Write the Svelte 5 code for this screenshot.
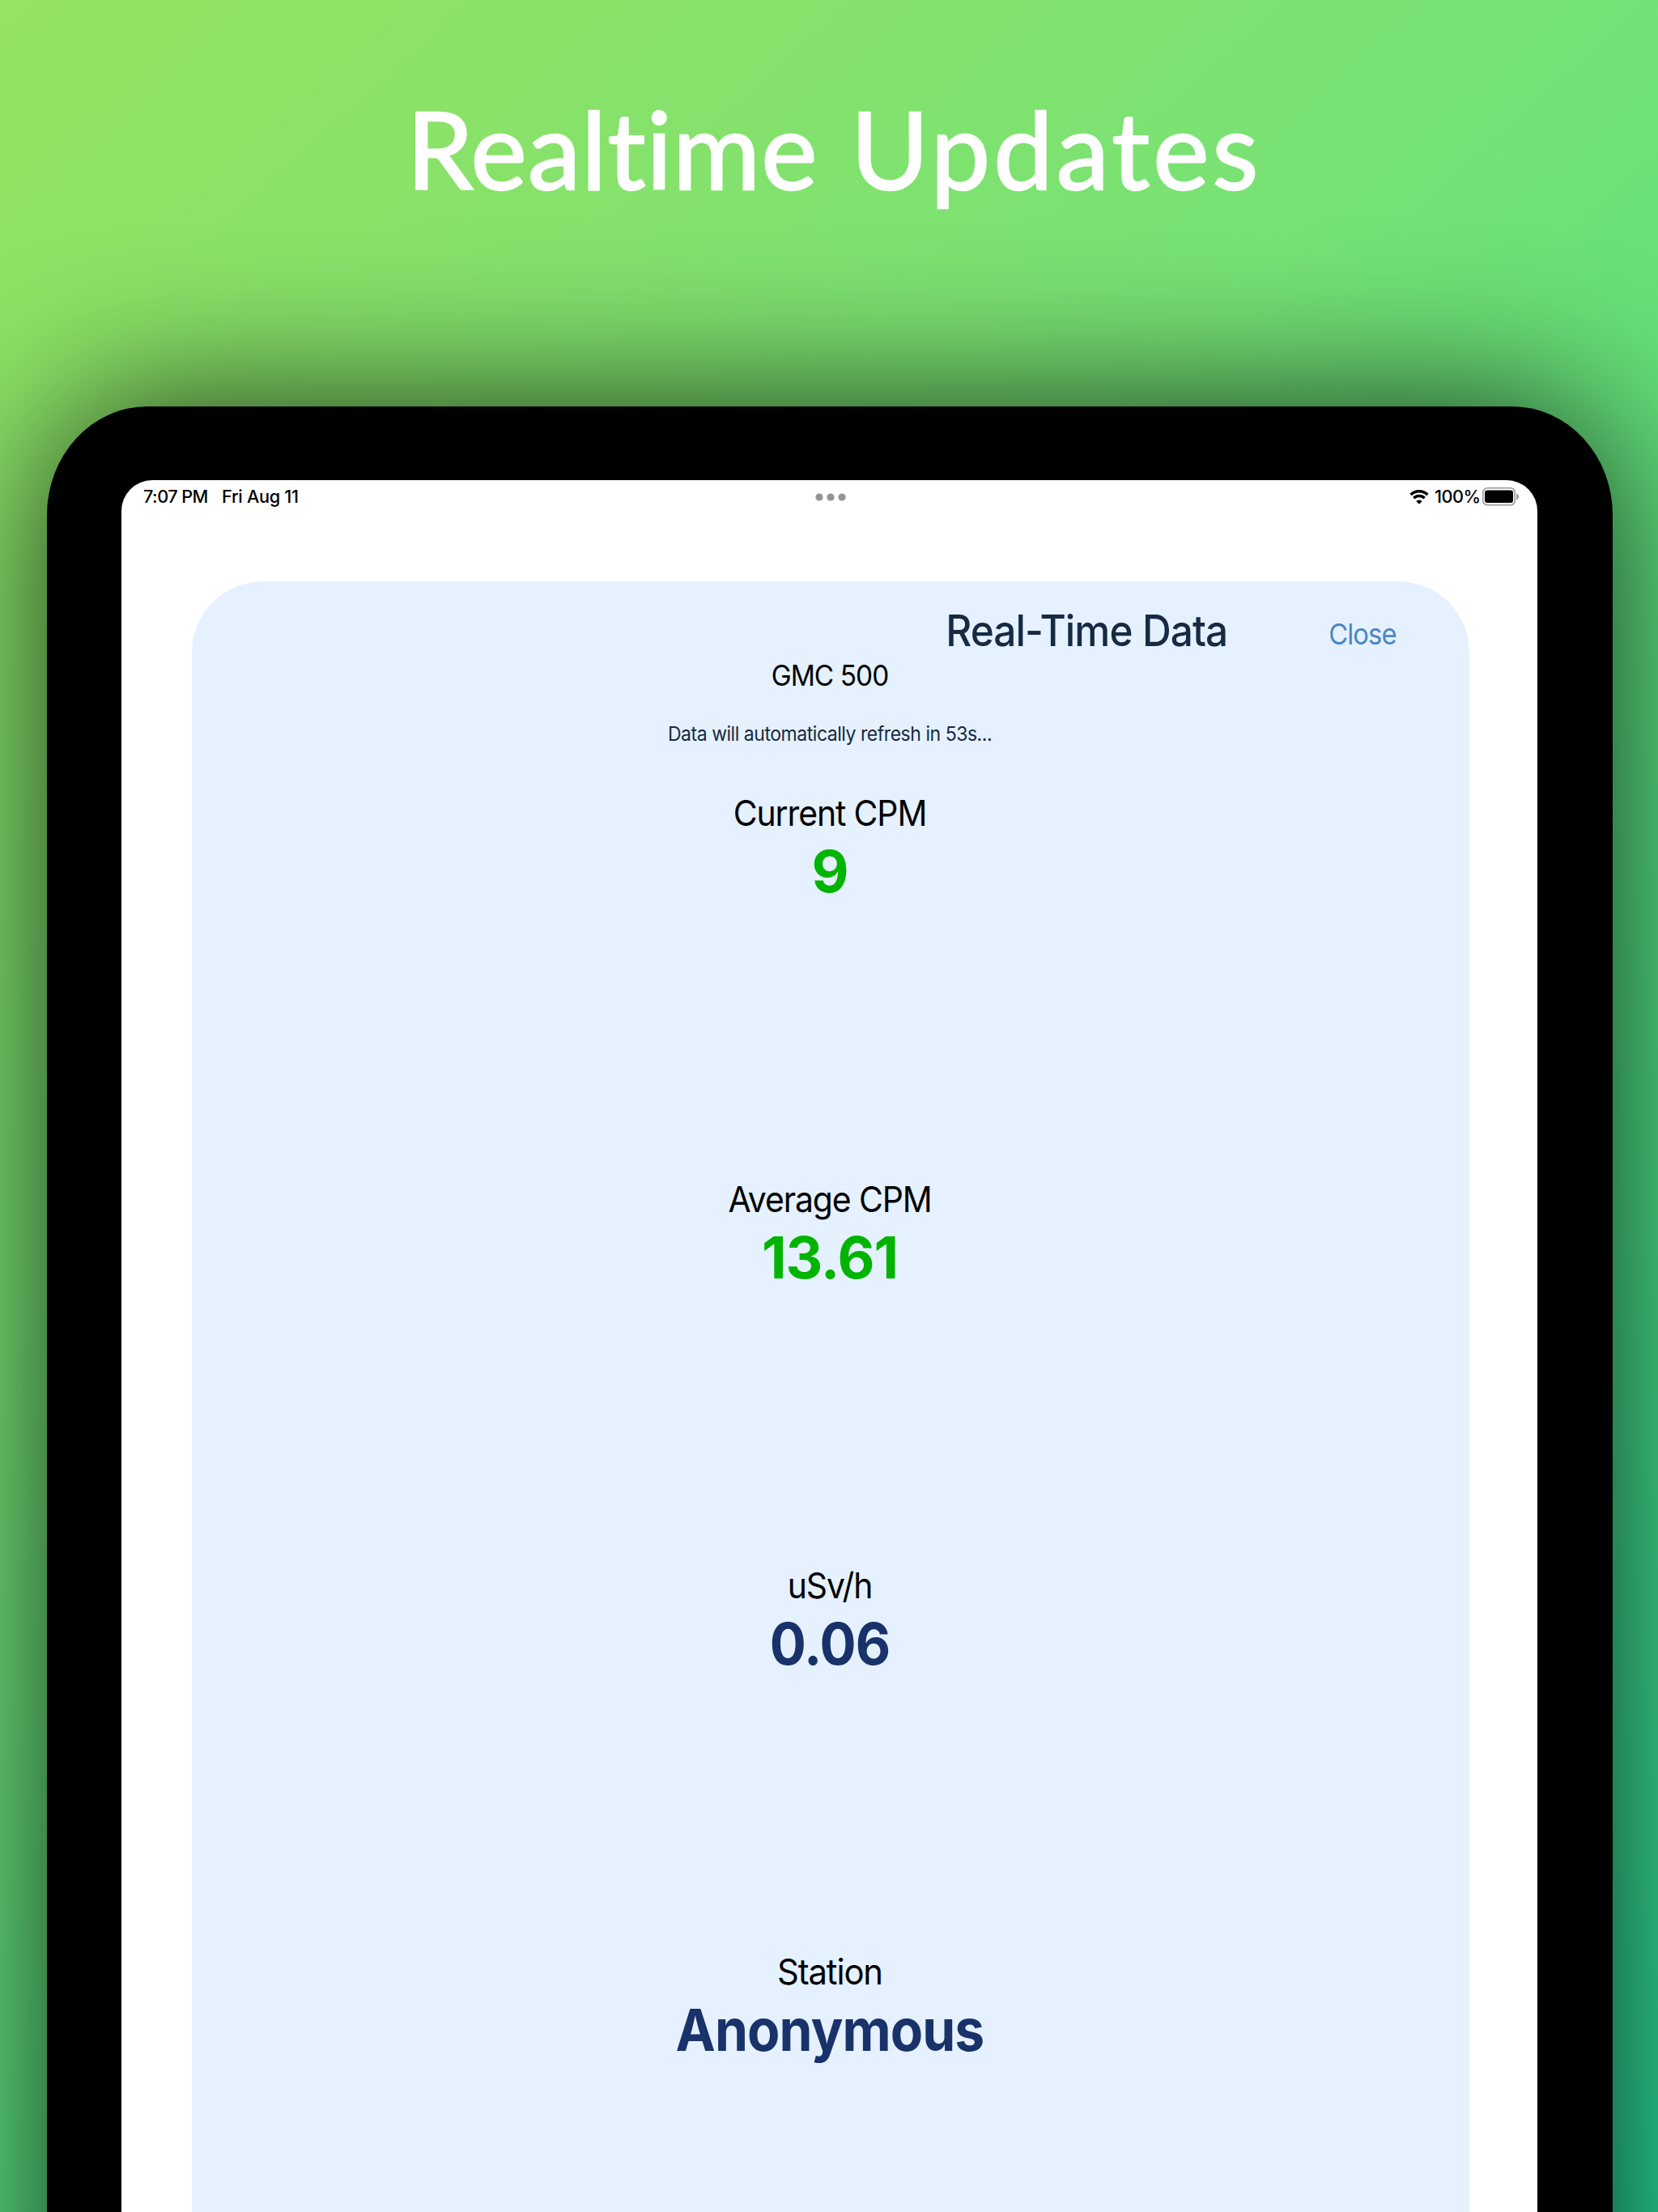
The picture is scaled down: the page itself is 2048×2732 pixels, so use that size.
<script>
  const readings = [
    { label: 'Current CPM', value: '9', kind: 'current' },
    { label: 'Average CPM', value: '13.61', kind: 'average' },
    { label: 'uSv/h', value: '0.06', kind: 'dose' },
    { label: 'Station', value: 'Anonymous', kind: 'station' }
  ];
</script>

<main class="poster">
  <h1><span class="first">Realtime</span> <span class="second">Updates</span></h1>
  <section class="device">
    <div class="screen">
      <div class="status">
        <span class="time">7:07 PM</span>
        <span class="date">Fri Aug 11</span>
        <svg class="dots" viewBox="0 0 38 10"><circle cx="5" cy="5" r="4.6" /><circle cx="19" cy="5" r="4.6" /><circle cx="33" cy="5" r="4.6" /></svg>
        <svg class="wifi" viewBox="0 0 24 19">
          <path d="M1.6 7a14.8 14.8 0 0 1 20.8 0" /><path d="M5.4 11.2a9.4 9.4 0 0 1 13.2 0" />
          <path class="tip" d="M12 18.8 8.2 15a5.4 5.4 0 0 1 7.6 0Z" />
        </svg>
        <span class="percent">100%</span>
        <svg class="battery" viewBox="0 0 46 23">
          <rect class="shell" x="0.8" y="0.8" width="39.4" height="21" rx="5.5" />
          <rect x="3" y="3.6" width="35" height="15.4" rx="3" />
          <path class="nub" d="M42 7.6q3 1.2 3 3.9t-3 3.9Z" />
        </svg>
      </div>
      <article class="card">
        <header><h2>Real-Time Data</h2><a class="close">Close</a></header>
        <p class="device-name">GMC 500</p>
        <p class="refresh">Data will automatically refresh in 53s...</p>
        <div class="readings">
          {#each readings as r}
            <section class="reading {r.kind}">
              <div class="label">{r.label}</div>
              <div class="value">{r.value}</div>
            </section>
          {/each}
        </div>
      </article>
    </div>
  </section>
</main>

<style>
  .poster {
    width: 2048px; height: 2732px; overflow: hidden; box-sizing: border-box;
    padding-left: 58px;
    background: linear-gradient(138deg, #96e261 0%, #76e275 38%, #5cdd7d 57%, #28d394 100%);
    font-family: Inter, "Liberation Sans", sans-serif;
  }
  h1, h2, p { margin: 0; font-weight: 400; }
  h1 {
    height: 502px; box-sizing: border-box; padding-top: 104px; padding-right: 45px;
    text-align: center; color: #fff; font: 400 131px/160px Lato, sans-serif;
    -webkit-text-stroke: 2.4px #fff;
  }
  .first { letter-spacing: 1.2px; margin-right: 7px; }
  .second { letter-spacing: 4.2px; }
  .device {
    width: 1934px; height: 2700px; box-sizing: border-box; padding: 91px 93px 0 92px;
    background: #000; border-radius: 124px 124px 0 0 / 134px 134px 0 0;
    box-shadow: 0 0 190px rgba(0, 0, 0, 0.77);
  }
  .screen {
    height: 2600px; background: #fff; border-radius: 38px 38px 0 0;
    display: flex; flex-direction: column;
  }
  .status {
    height: 125px; box-sizing: border-box; padding: 5px 22px 0 27px;
    display: flex; align-items: flex-start;
    font-size: 21.7px; line-height: 30px; font-weight: 500; color: #000; white-space: nowrap;
  }
  .time { width: 97px; letter-spacing: -0.55px; }
  .date { width: 500px; letter-spacing: -0.3px; }
  .dots { width: 38px; height: 10px; margin: 11px 0 0 233px; fill: #949494; }
  .wifi { width: 24px; height: 19px; margin: 6px 0 0 auto; fill: none; stroke: #000; stroke-width: 3.5; }
  .tip { fill: #000; stroke: none; }
  .percent { width: 54px; margin: 0 5px 0 7px; letter-spacing: -0.5px; }
  .battery { width: 46px; height: 23px; margin-top: 4px; }
  .shell { fill: none; stroke: #999; stroke-width: 1.6; }
  .nub { fill: #999; }
  .card {
    height: 2475px; margin: 0 84px 0 87px; padding-right: 2px; box-sizing: border-box;
    background: #e5f1ff; border-radius: 88px 88px 0 0;
  }
  header { display: flex; justify-content: flex-end; height: 95px; padding-right: 88px; align-items: flex-start; }
  h2 {
    font-size: 53px; line-height: 64px; font-weight: 500; color: #162b43;
    margin: 29px 117px 0 0; letter-spacing: -1px; transform: scaleX(0.935); transform-origin: right;
  }
  .close {
    font-size: 36px; line-height: 44px; color: #4b86c4; margin-top: 43px; letter-spacing: -1px;
    transform: scaleX(0.91); transform-origin: right;
  }
  .device-name {
    font-size: 35.5px; line-height: 44px; text-align: center; color: #000; letter-spacing: -1px;
    transform: scaleX(0.94);
  }
  .refresh {
    font-size: 24.2px; line-height: 30px; margin-top: 35px; text-align: center; color: #162b43;
    letter-spacing: -0.5px; transform: scaleX(0.952);
  }
  .readings { padding-top: 53px; }
  .reading { height: 477px; text-align: center; }
  .label { font-size: 44px; line-height: 58px; color: #000; letter-spacing: -1.2px; transform: scaleX(0.93); }
  .station .label { transform: scaleX(0.95); }
  .value {
    font-size: 72px; line-height: 86px; font-weight: 700; color: #19326a; letter-spacing: -1px;
    transform: scaleX(0.93);
  }
  .station .value { transform: scaleX(0.916); }
  .current .value, .average .value { color: #00b400; transform: scaleX(0.985); }
</style>
